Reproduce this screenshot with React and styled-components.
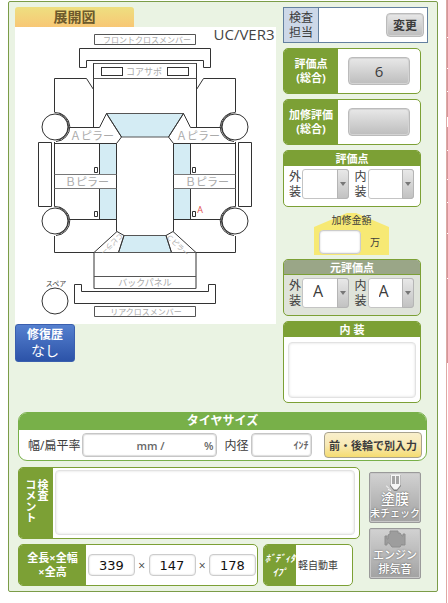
import React from 'react';
import styled, { createGlobalStyle, css } from 'styled-components';

const GREEN = '#7ca035';
const LINE = '#7b9c48';

const Global = createGlobalStyle`
  *, *::before, *::after { box-sizing: border-box; }
  body {
    margin: 0;
    background: #fff;
    color: #3c3c3c;
    font: 12px/15px "Open Sans", "Noto Sans CJK JP", sans-serif;
  }
  button, input, select, textarea { font: inherit; color: inherit; margin: 0; }
`;

const Page = styled.div`
  display: grid;
  grid-template-columns: minmax(0, 1fr) 2px;
  column-gap: 8px;
  padding-left: 8px;
`;

const Panel = styled.main`
  display: flex;
  flex-direction: column;
  margin: 1px 0 11px;
  padding: 5px 9px 5px 6px;
  background: #eaf3e3;
  border: 1px solid ${LINE};
  border-radius: 2px;
`;

const Strip = styled.aside`
  display: flex;
  flex-direction: column;
  gap: 1px;
  border-left: 1px solid #e0a9a5;
`;

const StripCell = styled.div`
  height: ${(p) => p.$h}px;
  background: ${(p) => (p.$blank ? '#fff' : '#d2979b')};
`;

const Top = styled.section`
  display: grid;
  grid-template-columns: minmax(0, 1fr) 145px;
  column-gap: 7px;
`;

const Left = styled.div`
  display: flex;
  flex-direction: column;
  align-items: flex-start;
`;

const Tab = styled.h2`
  width: 119px;
  height: 20px;
  margin: 0;
  border-radius: 3px 3px 0 0;
  background: linear-gradient(#eedf80, #f8c775);
  color: #6d5a2c;
  font-size: 14px;
  line-height: 20px;
  text-align: center;
`;

const Diagram = styled.svg`
  display: block;
  width: 100%;
  overflow: visible;
  background: #fff;
  fill: none;
  stroke: #333;
  stroke-width: 1;

  text {
    stroke: none;
    fill: #aaa;
    text-anchor: middle;
  }
  text.dark { fill: #444; }
  text.mark { fill: #e05050; }
`;

const RepairButton = styled.button`
  width: 60px;
  height: 38px;
  padding: 0;
  border: 1px solid #3a5fae;
  border-radius: 3px;
  background: linear-gradient(#5580cf, #2c53a8);
  color: #fff;
  font-size: 14px;
  line-height: 16px;

  strong { display: block; font-size: 12px; }
`;

const Right = styled.div`
  display: flex;
  flex-direction: column;
  gap: 5px;
`;

const Inspector = styled.div`
  display: grid;
  grid-template-columns: 35px 1fr;
  height: 36px;
  border: 1px solid #63809f;
  background: #fff;
`;

const InspectorName = styled.div`
  display: grid;
  place-items: center;
  background: #cdd8e8;
  border-right: 1px solid #63809f;
`;

const InspectorValue = styled.div`
  display: flex;
  align-items: center;
  justify-content: flex-end;
  padding-right: 3px;
`;

const GreyButton = styled.button`
  width: ${(p) => p.$w}px;
  height: ${(p) => p.$h}px;
  padding: 0;
  border: 1px solid #bbb;
  border-radius: 4px;
  background: linear-gradient(#e8e8e8, #bdbdbd);
  box-shadow: inset 0 0 0 1px #d4d4d4;
  font-size: ${(p) => p.$size || 12}px;
  font-weight: ${(p) => (p.$bold ? 700 : 400)};
`;

const card = css`
  border: 1px solid ${GREEN};
  border-radius: 5px;
  background: #fff;
  overflow: hidden;
`;

const SideCard = styled.div`
  ${card}
  display: grid;
  grid-template-columns: ${(p) => p.$side}px minmax(0, 1fr);
  height: ${(p) => p.$h}px;
`;

const SideLabel = styled.div`
  display: grid;
  place-items: center;
  background: ${GREEN};
  color: #fff;
  font-size: ${(p) => p.$size || 11}px;
  line-height: 14px;
  font-weight: 700;
  text-align: center;
  white-space: nowrap;
`;

const SideBody = styled.div`
  display: flex;
  align-items: center;
  justify-content: ${(p) => p.$align || 'center'};
  padding: ${(p) => p.$pad || '0'};
  font-size: ${(p) => p.$size || 12}px;
  white-space: nowrap;
`;

const Narrow = styled.div`
  display: flex;
  flex-direction: column;
  gap: 5px;
  width: 138px;
`;

const TitleCard = styled.div`
  ${card}
  height: ${(p) => p.$h}px;
  background: ${(p) => (p.$muted ? '#dfe3da' : '#fff')};
`;

const CardTitle = styled.h3`
  height: 15px;
  margin: 0;
  background: ${(p) => (p.$muted ? '#9aa687' : GREEN)};
  border-bottom: 1px solid ${GREEN};
  color: #fff;
  font-size: 11px;
  text-align: center;
`;

const Grades = styled.div`
  display: grid;
  grid-template-columns: 1fr 1fr;
  gap: 6px;
  padding: 3px 6px 0 5px;
`;

const GradeLabel = styled.label`
  display: grid;
  grid-template-columns: 12px 1fr;
  gap: 1px;
  line-height: 15px;
`;

const SelectWrap = styled.span`
  position: relative;
  display: block;
`;

const GradeSelect = styled.select`
  appearance: none;
  display: block;
  width: 100%;
  height: 30px;
  padding: 0 12px 3px 10px;
  border: 1px solid #c4c4c4;
  border-radius: 3px;
  background: #fff;
  font-size: 16px;
`;

const Arrow = styled.span`
  position: absolute;
  inset: 0 0 0 auto;
  width: 12px;
  display: grid;
  place-items: center;
  border: 1px solid #b5b5b5;
  border-radius: 0 3px 3px 0;
  background: linear-gradient(#e8e8e8, #c2c2c2);
  pointer-events: none;

  &::before {
    content: '';
    border: 3px solid transparent;
    border-top: 4px solid #777;
    border-bottom: 0;
  }
`;

const House = styled.div`
  position: relative;
  isolation: isolate;
  display: flex;
  flex-direction: column;
  align-items: center;
  width: 75px;
  height: 42px;
  margin: 1px 0 -1px 31px;
  font-size: 10px;

  &::before {
    content: '';
    position: absolute;
    inset: 0;
    z-index: -1;
    background: #f7e974;
    clip-path: polygon(0 14px, 44% 0, 56% 0, 100% 14px, 100% 100%, 0 100%);
  }
`;

const HouseRow = styled.label`
  display: grid;
  grid-template-columns: 42px 1fr;
  align-items: center;
  width: 100%;
  padding: 2px 0 0 5px;
  text-align: center;
`;

const TextBox = styled.input`
  width: ${(p) => p.$w}px;
  height: ${(p) => p.$h}px;
  padding: 0;
  border: 1px solid #ccc;
  border-radius: 4px;
  background: #fff;
  box-shadow: inset 0 0 2px #ccc;
  color: #111;
  font: 13px "DejaVu Sans", sans-serif;
  text-align: center;
`;

const Memo = styled.textarea`
  display: block;
  width: 100%;
  height: ${(p) => p.$h}px;
  padding: 4px;
  border: 1px solid #e2e2e2;
  border-radius: 4px;
  box-shadow: inset 0 0 3px #ddd;
  background: #fff;
  resize: none;
`;

const MemoPad = styled.div`
  padding: ${(p) => p.$pad};
`;

const TireCard = styled.section`
  margin: 9px 1px 6px 3px;
  height: 49px;
  border: 1px solid #78b049;
  border-radius: 9px;
  background: #fff;
  overflow: hidden;
`;

const TireTitle = styled.h3`
  height: 17px;
  margin: 0;
  background: #78b049;
  color: #fff;
  font-size: 12px;
  text-align: center;
`;

const TireRow = styled.div`
  display: flex;
  align-items: center;
  gap: 2px;
  padding: 2px 4px 0 9px;
  white-space: nowrap;
`;

const UnitBox = styled.span`
  display: flex;
  align-items: center;
  width: ${(p) => p.$w}px;
  height: 24px;
  padding: 0 3px 0 4px;
  border: 1px solid #c6c6c6;
  border-radius: 4px;
  box-shadow: inset 0 0 1px 1px #ddd;
  color: #666;
  font-size: ${(p) => p.$size || 11}px;
  font-weight: 600;
`;

const BareInput = styled.input`
  width: ${(p) => p.$w}px;
  min-width: 0;
  flex: ${(p) => (p.$grow ? 1 : 'none')};
  padding: 0;
  border: 0;
  background: transparent;
  outline: none;
`;

const RimLabel = styled.label`
  margin: 0 1px 0 5px;
`;

const SplitButton = styled.button`
  width: 98px;
  height: 26px;
  margin-left: auto;
  padding: 0;
  border: 1px solid #a8a28e;
  border-radius: 4px;
  background: linear-gradient(#f9efcc 0%, #f8e9b5 50%, #f5dc70 100%);
  font-size: 11px;
  font-weight: 700;
`;

const Bottom = styled.section`
  display: grid;
  grid-template-columns: minmax(0, 1fr) 52px;
  gap: 9px;
  padding: 0 7px 0 3px;
`;

const Stack = styled.div`
  display: flex;
  flex-direction: column;
  gap: 5px;
`;

const Row = styled.div`
  display: grid;
  grid-template-columns: minmax(0, 1fr) 90px;
  gap: 5px;
  margin-right: 7px;
`;

const Vertical = styled.span`
  writing-mode: vertical-rl;
  height: 48px;
  line-height: 12px;
  text-align: left;
`;

const Actions = styled.div`
  display: flex;
  flex-direction: column;
  gap: 5px;
  padding-top: 5px;
`;

const ActionButton = styled.button`
  display: flex;
  flex-direction: column;
  align-items: center;
  justify-content: flex-end;
  height: 51px;
  padding: 0 0 2px;
  border: 1px solid #9a9a9a;
  border-radius: 2px;
  background: linear-gradient(#d2d2d2, #a2a2a2);
  box-shadow: inset 0 0 0 1px #c8c8c8;
  color: #fff;
  font-size: ${(p) => p.$size}px;
  line-height: 14px;
  font-weight: 500;
  text-shadow: 0 0 2px #555;
  white-space: nowrap;

  svg { display: block; flex: none; }
`;

const BigWord = styled.span`
  font-size: 14px;
`;

/* One half of the unfolded body; the other half is its mirror image. */
function BodyHalf() {
  return (
    <g>
      <path d="M99.5 143.5H116.5V174.5H99.5ZM99.5 188.5H116.5V219.5H99.5Z" fill="#d4ecf4" stroke="none" />
      <path d="M54.5 112V78.5H86.5L93.5 89.5M93.5 63V127.5M70 127.5H99.5L106.5 113.5L121.5 137L116.5 143.5" />
      <path d="M54.5 143.5H116.5V231.5M54.5 142V206.5M99.5 143.5V174.5M99.5 188.5V219.5M70 219.5H116.5" />
      <path d="M54.5 174.5H116.5M54.5 188.5H116.5" stroke="#777" />
      <path d="M38.5 142.5H51.5V206.5H38.5ZM94.5 167.5H97.5V172.5H94.5ZM94.5 211.5H97.5V216.5H94.5Z" />
      <path d="M54.5 236V252.5H94M94 252.5L117 231.5L124 235.5L118.5 252.5M94 252.5V288.5" />
      <circle cx="55" cy="127" r="13" />
      <path d="M54.5 112.5A14.5 14.5 0 0 1 56 141.5M59 113.5A14 14 0 0 1 59 140" />
      <circle cx="55" cy="221" r="13" />
      <path d="M54.5 206.5A14.5 14.5 0 0 1 56 235.5M59 207.5A14 14 0 0 1 59 234" />
      <rect x="101.5" y="67.5" width="21" height="8" />
    </g>
  );
}

function BodyDiagram() {
  return (
    <Diagram viewBox="15 27 261 297" role="img" aria-label="展開図">
      <path d="M106.5 113.5H183.5L168.5 137H121.5ZM124 235.5H166L171.5 252.5H118.5Z" fill="#d4ecf4" stroke="#555" />
      <BodyHalf />
      <g transform="translate(290 0) scale(-1 1)"><BodyHalf /></g>
      <path d="M94.5 34.5H195.5V44.5H94.5ZM94.5 306.5H195.5V316.5H94.5Z" stroke="#555" />
      <path d="M79.5 48.5H210.5V67.5H203.5V60.5H86.5V67.5H79.5Z" />
      <path d="M93.5 63.5H196.5M93.5 78.5H196.5M94 252.5H196M94 276.5H196M94 288.5H196" stroke="#555" />
      <path d="M74.5 284.5H81.5V291.5H208.5V284.5H215.5V303.5H74.5Z" />
      <circle cx="55" cy="301" r="13" />
      <text x="147" y="43" fontSize="8">フロントクロスメンバー</text>
      <text x="144" y="75" fontSize="9">コアサポ</text>
      <text x="92" y="140" fontSize="11">Ａピラー</text>
      <text x="198" y="140" fontSize="11">Ａピラー</text>
      <text x="87" y="186" fontSize="11">Ｂピラー</text>
      <text x="207" y="186" fontSize="11">Ｂピラー</text>
      <text fontSize="7" transform="translate(110 242) rotate(137)">Ｃピラー</text>
      <text fontSize="7" transform="translate(176 247) rotate(43)">Ｃピラー</text>
      <text x="145" y="286" fontSize="9">バックパネル</text>
      <text x="146" y="315" fontSize="8">リアクロスメンバー</text>
      <text className="dark" x="56" y="286" fontSize="7">スペア</text>
      <text className="mark" x="200" y="213" fontSize="9">A</text>
      <text className="dark" x="244" y="40" fontSize="15">UC/VER3</text>
    </Diagram>
  );
}

function Grade({ name, value }) {
  return (
    <GradeLabel>
      {name}
      <SelectWrap>
        <GradeSelect defaultValue={value}>
          <option value="" />
          <option>A</option>
        </GradeSelect>
        <Arrow />
      </SelectWrap>
    </GradeLabel>
  );
}

function GradeCard({ title, value, muted }) {
  return (
    <TitleCard $h={57} $muted={muted}>
      <CardTitle $muted={muted}>{title}</CardTitle>
      <Grades>
        <Grade name="外装" value={value} />
        <Grade name="内装" value={value} />
      </Grades>
    </TitleCard>
  );
}

export default function App() {
  return (
    <Page>
      <Global />
      <Panel>
        <Top>
          <Left>
            <Tab>展開図</Tab>
            <BodyDiagram />
            <RepairButton><strong>修復歴</strong>なし</RepairButton>
          </Left>
          <Right>
            <Inspector>
              <InspectorName><span>検査<br />担当</span></InspectorName>
              <InspectorValue><GreyButton $w={38} $h={24} $bold>変更</GreyButton></InspectorValue>
            </Inspector>
            <Narrow>
              <SideCard $side={54} $h={46}>
                <SideLabel><span>評価点<br />(総合)</span></SideLabel>
                <SideBody><GreyButton $w={62} $h={28} $size={15} aria-label="評価点 6">6</GreyButton></SideBody>
              </SideCard>
              <SideCard $side={54} $h={46}>
                <SideLabel><span>加修評価<br />(総合)</span></SideLabel>
                <SideBody><GreyButton $w={62} $h={28} aria-label="加修評価" /></SideBody>
              </SideCard>
              <GradeCard title="評価点" value="" />
              <House>
                加修金額
                <HouseRow><TextBox $w={42} $h={24} aria-label="加修金額" />万</HouseRow>
              </House>
              <GradeCard title="元評価点" value="A" muted />
              <TitleCard $h={82}>
                <CardTitle>内 装</CardTitle>
                <MemoPad $pad="5px 4px"><Memo $h={56} aria-label="内装" /></MemoPad>
              </TitleCard>
            </Narrow>
          </Right>
        </Top>

        <TireCard>
          <TireTitle>タイヤサイズ</TireTitle>
          <TireRow>
            <label htmlFor="tire-width">幅/扁平率</label>
            <UnitBox $w={135}>
              <BareInput id="tire-width" $w={49} />
              mm /
              <BareInput $grow aria-label="扁平率" />
              %
            </UnitBox>
            <RimLabel htmlFor="rim">内径</RimLabel>
            <UnitBox $w={61} $size={10}>
              <BareInput id="rim" $grow />
              ｲﾝﾁ
            </UnitBox>
            <SplitButton>前・後輪で別入力</SplitButton>
          </TireRow>
        </TireCard>

        <Bottom>
          <Stack>
            <SideCard $side={34} $h={72}>
              <SideLabel><Vertical>検査<br />コメント</Vertical></SideLabel>
              <MemoPad $pad="2px 4px 2px 2px"><Memo $h={65} aria-label="検査コメント" /></MemoPad>
            </SideCard>
            <Row>
              <SideCard $side={67} $h={42}>
                <SideLabel><span>全長×全幅<br />×全高</span></SideLabel>
                <SideBody $align="space-between" $pad="0 1px 0 2px">
                  <TextBox $w={47} $h={22} defaultValue="339" aria-label="全長" />×
                  <TextBox $w={47} $h={22} defaultValue="147" aria-label="全幅" />×
                  <TextBox $w={47} $h={22} defaultValue="178" aria-label="全高" />
                </SideBody>
              </SideCard>
              <SideCard $side={32} $h={42}>
                <SideLabel $size={10}><em>ﾎﾞﾃﾞｨﾀ<br />ｲﾌﾟ</em></SideLabel>
                <SideBody $align="flex-start" $pad="0 0 0 2px" $size={10}>軽自動車</SideBody>
              </SideCard>
            </Row>
          </Stack>
          <Actions>
            <ActionButton $size={10}>
              <svg width="18" height="19" viewBox="0 0 18 19">
                <path d="M4 2H15V13L11 18H8L4 13Z" fill="#808080" />
                <path d="M4.5 1.5H14.5V12L11 16.5H8L4.5 12Z" fill="#f6f6f6" />
                <path d="M6 3H9V11H6ZM10 3H13V11H10Z" fill="#a5a5a5" />
                <path d="M0 12.5L3 15.5M2 16.5L5 17.5" stroke="#fff" />
              </svg>
              <BigWord>塗膜</BigWord>
              未チェック
            </ActionButton>
            <ActionButton $size={11}>
              <svg width="22" height="18" viewBox="0 0 22 18">
                <path d="M6 1H14V3H16L18 6H19V4H21V15H18V14L16 17H8L5 13H3V15H1V6H3V9H4V5L6 4Z" fill="#9d9d9d" stroke="#8e8e8e" />
              </svg>
              <span>エンジン</span>
              <span>排気音</span>
            </ActionButton>
          </Actions>
        </Bottom>
      </Panel>
      <Strip aria-hidden="true">
        <StripCell $h={37} />
        <StripCell $h={30} />
        <StripCell $h={22} />
        <StripCell $h={25} />
        <StripCell $h={8} $blank />
        <StripCell $h={23} />
        <StripCell $h={28} />
        <StripCell $h={22} />
        <StripCell $h={30} />
        <StripCell $h={44} />
        <StripCell $h={84} />
      </Strip>
    </Page>
  );
}
